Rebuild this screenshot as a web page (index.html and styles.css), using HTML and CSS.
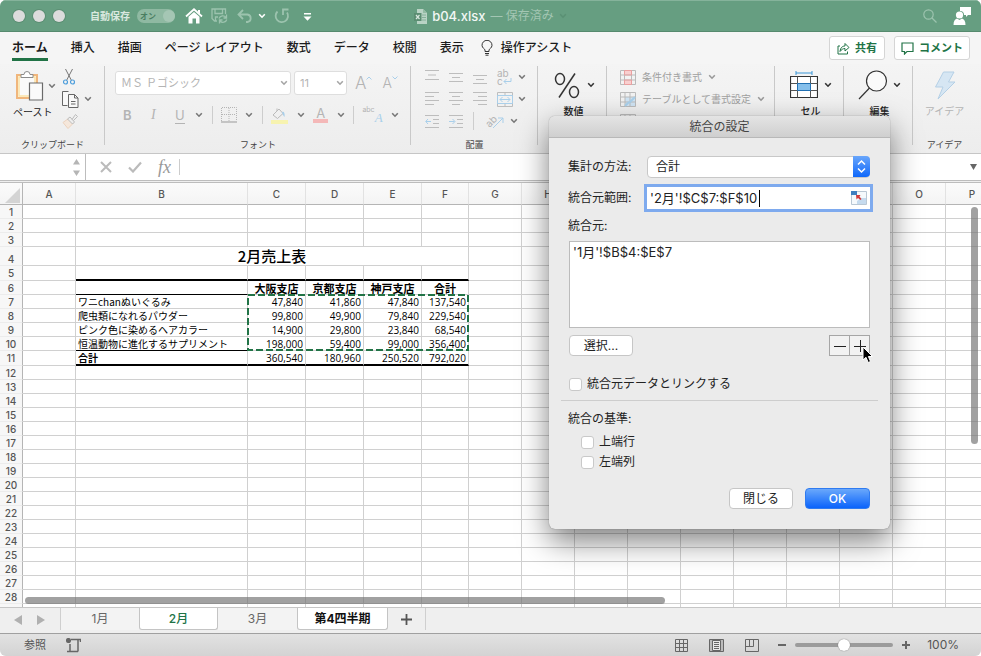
FILE: index.html
```html
<!doctype html>
<html lang="ja">
<head>
    <meta charset="UTF-8">
    <meta name="viewport" content="width=device-width, initial-scale=1.0">
    <title>b04.xlsx</title>
    <link rel="stylesheet" href="styles.css">
</head>
<body>
    <svg class="defs" width="0" height="0">
        <symbol id="caret" viewBox="0 0 8 6"><path d="M1.200 1.300L4 4.200L6.800 1.300" fill="none" stroke="currentColor" stroke-width="1.600"/></symbol>
    </svg>
    <div class="window">
        <header class="titlebar">
            <div class="title-left">
                <div class="lights">
                    <button aria-label="閉じる"></button>
                    <button aria-label="しまう"></button>
                    <button aria-label="拡大"></button>
                </div>
                <span class="autosave">自動保存</span>
                <button class="toggle">オン</button>
                <button class="plain home" aria-label="ホーム"><svg width="18" height="16" viewBox="0 0 18 16"><path d="M1 8.500L9 1.300L17 8.500" fill="none" stroke="#fff" stroke-width="1.800"/><path d="M13 2h2v4l-2-2z" fill="#fff"/><path d="M3.500 8.800L9 4l5.500 4.800V15.500H11V10.500H7.500V15.500H3.500z" fill="#fff"/></svg></button>
                <button class="plain save" aria-label="保存"><svg width="17" height="16" viewBox="0 0 17 16" fill="none" stroke="#9cc3ae" stroke-width="1.300"><path d="M6 13H3.500L1 10.500V1H14.500V6M4 1V5.500H11.500V1M4.500 13V9H7"/><path d="M8 10.500A4 4 0 0 1 15 9.500M15.500 6.500V10H12.500M15.800 11.500A4 4 0 0 1 9 13M8.500 15.500V12H11.500"/></svg></button>
                <button class="plain undo" aria-label="元に戻す"><svg width="16" height="14" viewBox="0 0 16 14" fill="none" stroke="#9cc3ae" stroke-width="1.800"><path d="M6 1L1.500 5.500L6 10M2 5.500H10.500A3.800 3.800 0 0 1 10.500 13H9"/></svg></button>
                <svg class="undo-caret" width="8" height="6"><use href="#caret"/></svg>
                <button class="plain redo" aria-label="やり直し"><svg width="16" height="16" viewBox="0 0 16 16" fill="none" stroke="#9cc3ae" stroke-width="1.800"><path d="M3.500 3.500A6.200 6.200 0 1 0 13 4.500M9 7V1.500H14.500"/></svg></button>
                <button class="plain" aria-label="カスタマイズ"><svg width="9" height="9" viewBox="0 0 9 9" fill="#fff"><path d="M1 1h7v1.500H1zM0.500 4.500h8L4.500 8.800z"/></svg></button>
            </div>
            <div class="doc-title">
                <svg width="13" height="15" viewBox="0 0 13 15"><path d="M3 0h6l4 4v11H3z" fill="#b9d3c5"/><path d="M9 0v4h4" fill="#93bba4"/><path d="M8 6h4M8 8.500h4M8 11h4" stroke="#86b09a"/><path d="M0 4h7.500v8H0z" fill="#5b8d72"/><path d="M2 6l3.500 4M5.500 6L2 10" stroke="#d8e8df" stroke-width="1.200"/></svg>
                <span class="doc-name">b04.xlsx</span>
                <span class="doc-state">— 保存済み</span>
                <svg class="doc-caret" width="8" height="6"><use href="#caret"/></svg>
            </div>
            <div class="title-right">
                <button class="plain" aria-label="検索"><svg width="14" height="14" viewBox="0 0 14 14" fill="none" stroke="#9cc3ae" stroke-width="1.200"><circle cx="5.500" cy="5.500" r="4.700"/><path d="M9 9l4.500 4.500"/></svg></button>
                <button class="plain" aria-label="アカウント"><svg width="18" height="18" viewBox="0 0 18 18" fill="#fff"><path d="M7 0h11v8h-3l-2 2V8h-2A4 4 0 0 0 7 4z"/><circle cx="6.500" cy="8" r="3.600"/><path d="M0.500 18C0.500 14 2 12 4 11.500L6.500 13L9 11.500C11 12 12.500 14 12.500 18z"/></svg></button>
            </div>
        </header>

        <nav class="tabs">
            <a href="#" class="selected">ホーム</a>
            <a href="#">挿入</a>
            <a href="#">描画</a>
            <a href="#">ページ レイアウト</a>
            <a href="#">数式</a>
            <a href="#">データ</a>
            <a href="#">校閲</a>
            <a href="#">表示</a>
            <a href="#" class="assist"><svg width="12" height="16" viewBox="0 0 12 16" fill="none" stroke="#333" stroke-width="1"><path d="M4 11.500V10C4 9 1 8 1 5.300A5 5 0 0 1 11 5.300C11 8 8 9 8 10V11.500zM4 13.500H8M4.500 15.200H7.500"/></svg>操作アシスト</a>
            <div class="tab-buttons">
                <button class="share"><svg width="13" height="13" viewBox="0 0 13 13" fill="none" stroke="#217346" stroke-width="1"><path d="M3 4H1V12H10.500V9.500"/><path d="M3 9.500C3.500 5.500 5.500 4 8 4V1.500L12 5.500L8 9V6.500C6 6.500 4.500 7.500 3 9.500z"/></svg>共有</button>
                <button class="comment"><svg width="13" height="13" viewBox="0 0 13 13" fill="none" stroke="#217346" stroke-width="1.200"><path d="M1 1H12V9.500H6L3.500 12V9.500H1z"/></svg>コメント</button>
            </div>
        </nav>

        <div class="ribbon">
            <section class="group clipboard">
                <div class="clip-tools">
                    <button class="plain paste">
                        <svg width="28" height="31" viewBox="0 0 28 31"><path d="M1 5H21V28H1z" fill="#fafafa" stroke="#f0b67c" stroke-width="2"/><path d="M3 7H19V26H3z" fill="none" stroke="#fbe3a6" stroke-width="1.500"/><path d="M5 7.500V4.500H8A3 3 0 0 1 14 4.500H17V7.500z" fill="#fff" stroke="#8c8c8c"/><path d="M13.500 13H26.500V30H13.500z" fill="#fafafa" stroke="#6a6a6a" stroke-width="1.200"/></svg>
                        <svg class="caret" width="8" height="6"><use href="#caret"/></svg>
                        <span>ペースト</span>
                    </button>
                    <div class="clip-small">
                        <button class="plain" aria-label="カット"><svg width="14" height="18" viewBox="0 0 14 18" fill="none"><path d="M3.500 1L9.500 12.500M10.500 1L4.500 12.500" stroke="#777"/><circle cx="3.500" cy="14" r="2" stroke="#4f9fdc" stroke-width="1.200"/><circle cx="10.500" cy="14" r="2" stroke="#4f9fdc" stroke-width="1.200"/></svg></button>
                        <button class="plain copy" aria-label="コピー"><svg width="17" height="17" viewBox="0 0 17 17" fill="#f8f8f8" stroke="#666"><path d="M5.500 14.500H0.500V0.500H6.500"/><path d="M6.500 3.500H12.500L16 7V16.500H6.500z"/><path d="M12.500 3.500V7H16M9 10.500H13.500M9 13H13.500" fill="none"/></svg><svg class="caret" width="8" height="6"><use href="#caret"/></svg></button>
                        <button class="plain faded" aria-label="書式のコピー"><svg width="16" height="16" viewBox="0 0 16 16" fill="none"><path d="M1 9.500L6.500 5.500L11 10.500L6 15.500z" fill="#fbe0c8" stroke="#eab78e"/><path d="M5.500 6L8 4L12.500 9L10.500 11z" fill="#eee" stroke="#888"/><path d="M10 6.500L13.500 1.500L15.500 3.500L11.500 7.500" stroke="#888"/></svg></button>
                    </div>
                </div>
                <h2>クリップボード</h2>
            </section>

            <section class="group font">
                <div class="font-row">
                    <div class="combo name"><select aria-label="フォント名"><option>ＭＳ Ｐゴシック</option></select><svg width="8" height="6"><use href="#caret"/></svg></div>
                    <div class="combo size"><select aria-label="サイズ"><option>11</option></select><svg width="8" height="6"><use href="#caret"/></svg></div>
                    <button class="plain grow" aria-label="拡大">A<svg width="6" height="4" viewBox="0 0 6 4"><path d="M0.500 3.500L3 1L5.500 3.500" fill="none" stroke="#a9cfea"/></svg></button>
                    <button class="plain shrink" aria-label="縮小">A<svg width="6" height="4" viewBox="0 0 6 4"><path d="M0.500 0.500L3 3L5.500 0.500" fill="none" stroke="#a9cfea"/></svg></button>
                </div>
                <div class="font-row styles">
                    <button class="plain bold">B</button>
                    <button class="plain italic">I</button>
                    <button class="plain underline">U</button>
                    <svg class="caret" width="8" height="6"><use href="#caret"/></svg>
                    <i class="rule"></i>
                    <button class="plain" aria-label="罫線"><svg width="16" height="16" viewBox="0 0 16 16" fill="none" stroke="#b5b5b5"><path d="M0.500 14V0.500H15.500V14M8 1V14M1 7.500H15" stroke-dasharray="1 1"/><path d="M0 15H16" stroke="#999"/></svg></button>
                    <svg class="caret" width="8" height="6"><use href="#caret"/></svg>
                    <i class="rule"></i>
                    <button class="plain" aria-label="塗りつぶし"><svg width="17" height="17" viewBox="0 0 17 17" fill="none"><path d="M2 8L8 2L12 6.500L6.500 11.500zM6 4V1.500" stroke="#bbb"/><path d="M11 5C13 4 14 6 13.500 10C12.500 9 12 8 11 5z" fill="#a9cfea"/><path d="M0 13H17V17H0z" fill="#f7f3b0"/></svg></button>
                    <svg class="caret" width="8" height="6"><use href="#caret"/></svg>
                    <button class="plain font-color">A</button>
                    <svg class="caret" width="8" height="6"><use href="#caret"/></svg>
                    <i class="rule"></i>
                    <button class="plain phonetic">abc<b>A</b></button>
                    <svg class="caret" width="8" height="6"><use href="#caret"/></svg>
                </div>
                <h2>フォント</h2>
            </section>

            <section class="group align">
                <div class="align-grid">
                    <svg width="14" height="14" class="ln"><path d="M0 .5H14M3 5H11M0 9.500H14"/></svg>
                    <svg width="14" height="14" class="ln"><path d="M0 3.500H14M3 7.500H11M0 11.500H14"/></svg>
                    <svg width="14" height="14" class="ln"><path d="M0 5.500H14M3 9.500H11M0 13.500H14"/></svg>
                    <button class="plain wrap"><span>ab</span><span>c<svg width="9" height="7" viewBox="0 0 9 7" fill="none" stroke="#a9cfea"><path d="M8 0V3.500H1M3.500 1L1 3.500L3.500 6"/></svg></span></button>
                    <svg class="caret" width="8" height="6"><use href="#caret"/></svg>
                    <svg width="14" height="14" class="ln"><path d="M0 .5H14M0 4.500H9M0 8.500H14M0 12.500H9"/></svg>
                    <svg width="14" height="14" class="ln"><path d="M0 .5H14M3 4.500H11M0 8.500H14M3 12.500H11"/></svg>
                    <svg width="14" height="14" class="ln"><path d="M0 .5H14M5 4.500H14M0 8.500H14M5 12.500H14"/></svg>
                    <svg width="16" height="15" viewBox="0 0 16 15" fill="none" stroke="#bdbdbd"><path d="M.5.500H15.500V14.500H.5zM8 .5V3M8 12V14.500"/><path d="M.5 3.500H15.500V11.500H.5zM3 7.500H13M5.500 5L3 7.500L5.500 10M10.500 5L13 7.500L10.500 10" stroke="#a9cfea"/></svg>
                    <svg class="caret" width="8" height="6"><use href="#caret"/></svg>
                    <svg width="14" height="14" class="ln"><path d="M0 1.500H14M8 5.500H14M8 9.500H14M0 13.500H14"/><path d="M6 7.500H1M3 5L.7 7.500L3 10" stroke="#a9cfea"/></svg>
                    <svg width="14" height="14" class="ln"><path d="M0 1.500H14M8 5.500H14M8 9.500H14M0 13.500H14"/><path d="M0 7.500H5.500M3.500 5L6 7.500L3.500 10" stroke="#a9cfea"/></svg>
                    <i class="rule"></i>
                    <button class="plain rotate"><span>ab</span><svg width="12" height="12" viewBox="0 0 12 12" fill="none" stroke="#a9cfea"><path d="M1 11L11 1M6 1H11V6"/></svg></button>
                    <svg class="caret near" width="8" height="6"><use href="#caret"/></svg>
                </div>
                <h2>配置</h2>
            </section>

            <section class="group big">
                <button class="plain big-button"><svg width="26" height="27" viewBox="0 0 26 27" fill="none" stroke="#333" stroke-width="1.500"><ellipse cx="6" cy="7" rx="4.500" ry="5.500"/><ellipse cx="20" cy="20" rx="4.500" ry="5.500"/><path d="M21 1.500L5 25.500"/></svg><svg class="caret dark" width="8" height="6"><use href="#caret"/></svg><span>数値</span></button>
            </section>

            <section class="group cond">
                <button class="plain"><svg width="16" height="15" viewBox="0 0 16 15" fill="none"><path d="M4 1H12V5H4zM7 10H12V14H4V10z" fill="#f9cfcf"/><path d="M.5.500H15.500V14.500H.5zM4.500.500V14.500M11.500.500V14.500M.5 5H15.500M.5 10H15.500" stroke="#bbb"/><path d="M4.500.500H11.500V5H4.500zM4.500 10H11.500V14.500H4.500z" stroke="#eba0a0"/></svg>条件付き書式<svg class="caret" width="8" height="6"><use href="#caret"/></svg></button>
                <button class="plain"><svg width="16" height="15" viewBox="0 0 16 15" fill="none"><path d="M5 5H15V14H5z" fill="#cfe4f4"/><path d="M.5.500H15.500V14.500H.5zM5 .5V14.500M10 .5V14.500M.5 5H15.500M.5 10H15.500" stroke="#bbb"/><path d="M15 5L9 11M9 10L5 14" stroke="#a9cfea" stroke-width="2"/></svg>テーブルとして書式設定<svg class="caret" width="8" height="6"><use href="#caret"/></svg></button>
                <button class="plain" aria-label="セルのスタイル"><svg width="16" height="15" viewBox="0 0 16 15" fill="none"><path d="M.5.500H15.500V14.500H.5zM5 .5V14.500M10 .5V14.500M.5 5H15.500M.5 10H15.500" stroke="#bbb"/></svg></button>
            </section>

            <section class="group big">
                <button class="plain big-button"><svg width="28" height="28" viewBox="0 0 28 28" fill="none"><path d="M6 2H22M6 0V4M22 0V4" stroke="#3a96d6"/><path d="M.5 5.500H27.500V26.500H.5z" fill="#fff" stroke="#333" stroke-width="1.200"/><path d="M7.500 5.500V26.500M20.500 5.500V26.500M.5 12.500H27.500M.5 19.500H27.500" stroke="#555"/><path d="M7.500 12.500H20.500V19.500H7.500z" fill="#85bfeb" stroke="#1f6fb2"/></svg><svg class="caret dark" width="8" height="6"><use href="#caret"/></svg><span>セル</span></button>
            </section>

            <section class="group big">
                <button class="plain big-button"><svg width="30" height="30" viewBox="0 0 30 30" fill="none" stroke="#333" stroke-width="1.200"><circle cx="18.500" cy="11" r="10" fill="#fafafa"/><path d="M11.500 18L1 29"/></svg><svg class="caret dark" width="8" height="6"><use href="#caret"/></svg><span>編集</span></button>
            </section>

            <section class="group ideas">
                <button class="plain"><svg width="22" height="29" viewBox="0 0 22 29"><path d="M9.500 1H20L14.500 11H21L4 28L9 16H1.500z" fill="#d6e6f3" stroke="#b4cfe5"/></svg><span>アイデア</span></button>
                <h2>アイデア</h2>
            </section>
        </div>

        <div class="formula-bar">
            <div class="name-box"><input type="text" aria-label="名前ボックス"><svg width="7" height="17" viewBox="0 0 7 17" fill="#b5b5b5"><path d="M0 5.500L3.500 0L7 5.500zM0 11.500L3.500 17L7 11.500z"/></svg></div>
            <button class="plain" aria-label="キャンセル"><svg width="12" height="12" viewBox="0 0 12 12" stroke="#bbb" stroke-width="2"><path d="M1 1L11 11M11 1L1 11"/></svg></button>
            <button class="plain" aria-label="入力"><svg width="14" height="12" viewBox="0 0 14 12" fill="none" stroke="#bbb" stroke-width="2.200"><path d="M1 6.500L5 10.500L13 1.500"/></svg></button>
            <button class="plain fx">fx</button>
            <input type="text" class="formula" aria-label="数式">
            <button class="plain" aria-label="展開"><svg width="7" height="6" viewBox="0 0 7 6"><path d="M0 0H7L3.500 6z" fill="#666"/></svg></button>
        </div>

        <main class="sheet">
            <table class="grid">
                <colgroup>
                    <col class="col-head"><col class="col-std"><col class="col-item">
                    <col class="col-shop"><col class="col-shop"><col class="col-shop"><col class="col-total">
                    <col class="col-std" span="10">
                </colgroup>
                <thead><tr id="letters"></tr></thead>
                <tbody id="rows"></tbody>
            </table>
            <div class="vbar"></div>
            <div class="hbar"></div>
        </main>

        <nav class="sheet-tabs">
            <button class="plain arrow" aria-label="前"><svg width="8" height="10" viewBox="0 0 8 10"><path d="M8 0V10L0 5z" fill="#b0b0b0"/></svg></button>
            <button class="plain arrow" aria-label="次"><svg width="8" height="10" viewBox="0 0 8 10"><path d="M0 0V10L8 5z" fill="#b0b0b0"/></svg></button>
            <a href="#" class="first">1月</a>
            <a href="#" class="selected">2月</a>
            <a href="#">3月</a>
            <a href="#" class="white">第4四半期</a>
            <button class="plain add" aria-label="シートの追加"><svg width="11" height="11" viewBox="0 0 11 11" stroke="#555" stroke-width="1.800"><path d="M5.500 0V11M0 5.500H11"/></svg></button>
        </nav>

        <footer class="status">
            <span class="mode">参照</span>
            <svg width="15" height="15" viewBox="0 0 15 15" fill="none" stroke="#666" stroke-width="1.500"><circle cx="2.500" cy="2.500" r="1.800" fill="#666"/><path d="M5 1.500H14.500V4M12 1.500V13.500M1 13.500H12M4 6V13"/></svg>
            <div class="views">
                <button class="plain" aria-label="標準"><svg width="13" height="13" viewBox="0 0 13 13" fill="none" stroke="#666"><path d="M.5.500H12.500V12.500H.5zM4.500.500V12.500M8.500.500V12.500M.5 4.500H12.500M.5 8.500H12.500"/></svg></button>
                <button class="plain" aria-label="ページ レイアウト"><svg width="15" height="13" viewBox="0 0 15 13" fill="none" stroke="#666"><path d="M.5.500H14.500V12.500H.5z" fill="#bbb"/><path d="M3.500 1.500H11.500V11.500H3.500z" fill="#e8e8e8"/><path d="M5 3.500H10M5 5.500H10M5 7.500H10M5 9.500H10"/></svg></button>
                <button class="plain" aria-label="改ページ"><svg width="14" height="13" viewBox="0 0 14 13" fill="none" stroke="#666"><path d="M.5.500H13.500V12.500H.5zM.5 7.500H8.500V.5M4.500 .5V7.500"/></svg></button>
            </div>
            <button class="plain" aria-label="縮小"><svg width="8" height="8" viewBox="0 0 8 8" stroke="#666" stroke-width="2"><path d="M0 4H8"/></svg></button>
            <input type="range" class="zoom" min="0" max="100" value="50" aria-label="ズーム">
            <button class="plain" aria-label="拡大"><svg width="8" height="8" viewBox="0 0 8 8" stroke="#666" stroke-width="2"><path d="M0 4H8M4 0V8"/></svg></button>
            <span class="percent">100%</span>
        </footer>

        <form class="dialog" role="dialog" aria-labelledby="dialog-title">
            <h1 id="dialog-title">統合の設定</h1>
            <div class="dialog-body">
                <div class="field">
                    <label for="func">集計の方法:</label>
                    <div class="popup">
                        <select id="func"><option>合計</option></select>
                        <svg width="17" height="21" viewBox="0 0 17 21" fill="none" stroke="#fff" stroke-width="1.500"><path d="M5 8.500L8.500 5L12 8.500M5 12.500L8.500 16L12 12.500"/></svg>
                    </div>
                </div>
                <div class="field">
                    <label for="range">統合元範囲:</label>
                    <div class="range">
                        <input id="range" type="text" value="'2月'!$C$7:$F$10">
                        <i class="cursor"></i>
                        <svg width="16" height="14" viewBox="0 0 16 14"><path d="M.5.500H15.500V13.500H.5z" fill="#f5f9fc" stroke="#b9c7d4"/><path d="M0 0H6V4H0z" fill="#3f7fbf"/><path d="M10 7H15V13H6V10z" fill="#c5daee"/><path d="M5 4H9.500L8.500 5.500L10.500 8L9.500 9L7 7L5.500 8.500z" fill="#d13a3a"/></svg>
                    </div>
                </div>
                <label for="refs" class="refs-label">統合元:</label>
                <textarea id="refs">'1月'!$B$4:$E$7</textarea>
                <div class="refs-buttons">
                    <button type="button" class="push">選択...</button>
                    <div class="plus-minus">
                        <button type="button" aria-label="削除"><svg width="12" height="12"><path d="M0 6.500H12" stroke="#222"/></svg></button>
                        <button type="button" aria-label="追加"><svg width="12" height="12"><path d="M0 6.500H12M6.500 0V12" stroke="#222"/></svg></button>
                        <svg class="pointer" width="12" height="18" viewBox="0 0 12 18"><path d="M1 1V14L4 11.300L6.200 16.500L8.500 15.500L6.400 10.500H10.500z" fill="#000" stroke="#fff"/></svg>
                    </div>
                </div>
                <label class="check link"><input type="checkbox">統合元データとリンクする</label>
                <hr>
                <fieldset>
                    <legend>統合の基準:</legend>
                    <label class="check"><input type="checkbox">上端行</label>
                    <label class="check"><input type="checkbox">左端列</label>
                </fieldset>
                <div class="actions">
                    <button type="button" class="push">閉じる</button>
                    <button type="submit" class="push ok">OK</button>
                </div>
            </div>
        </form>
    </div>

    <script>
        var letters = 'ABCDEFGHIJKLMNOP'.split('');
        var data = {
            6: ['', '大阪支店', '京都支店', '神戸支店', '合計'],
            7: ['ワニchanぬいぐるみ', '47,840', '41,860', '47,840', '137,540'],
            8: ['爬虫類になれるパウダー', '99,800', '49,900', '79,840', '229,540'],
            9: ['ピンク色に染めるヘアカラー', '14,900', '29,800', '23,840', '68,540'],
            10: ['恒温動物に進化するサプリメント', '198,000', '59,400', '99,000', '356,400'],
            11: ['合計', '360,540', '180,960', '250,520', '792,020']
        };
        // dashed frame round C7:F10, anchored in C7
        var ants = '<svg class="ants"><rect x="1" y="1" width="220" height="55"/></svg>';
        var head = '<th class="corner"><svg width="15" height="15"><path d="M15 0V15H0z" fill="#d4d4d4"/></svg></th>';
        letters.forEach(function (l) {
            head += '<th>' + l + '</th>';
        });
        document.getElementById('letters').innerHTML = head;

        var html = '';
        for (var r = 1; r <= 29; r++) {
            html += '<tr class="r' + r + '"><th>' + (r < 29 ? r : '') + '</th>';
            for (var c = 0; c < letters.length; c++) {
                if (r === 4 && c === 1) {
                    html += '<td class="title" colspan="5">2月売上表</td>';
                    c = 5;
                    continue;
                }
                var inTable = c >= 1 && c <= 5;
                var text = data[r] && inTable ? data[r][c - 1] : '';
                var cls = inTable ? 't ' + (c === 1 ? 'item' : 'num') : '';
                html += '<td class="' + cls + '">' + text + (r === 7 && c === 2 ? ants : '') + '</td>';
            }
            html += '</tr>';
        }
        document.getElementById('rows').innerHTML = html;
    </script>
</body>
</html>
```
FILE: styles.css
```css
*{
    box-sizing: border-box;
}
body{
    margin: 0;
    background: #fff;
    font-family: Inter, "Noto Sans CJK JP", sans-serif;
    font-size: 12px;
    line-height: 16px;
    color: #222;
}
button,input,select,textarea{
    font: inherit;
    color: inherit;
    margin: 0;
}
a{
    color: inherit;
    text-decoration: none;
}
svg{
    display: block;
    flex: none;
}
h1,h2{
    margin: 0;
    font-weight: normal;
}
.defs{
    position: absolute;
}
.plain{
    border: 0;
    padding: 0;
    background: none;
    display: flex;
    align-items: center;
}
.caret{
    color: #777;
}
.caret.dark{
    color: #333;
}
.window{
    position: relative;
    display: flex;
    flex-direction: column;
    height: 100vh;
    border-radius: 6px;
    overflow: hidden;
    background: #efefef;
}

/* title bar */
.titlebar{
    height: 32px;
    flex: none;
    display: grid;
    grid-template-columns: 1fr auto 1fr;
    align-items: center;
    background: #669e81;
    border-top: 1px solid #85b39b;
    border-bottom: 1px solid #568a6e;
}
.title-left{
    display: flex;
    align-items: center;
    padding-left: 13px;
}
.lights{
    display: flex;
    gap: 8px;
}
.lights button{
    width: 12px;
    height: 12px;
    padding: 0;
    border: 0;
    border-radius: 50%;
    background: #dcdcdc;
    box-shadow: 0 0 0 1px #5c8f74;
}
.autosave{
    margin-left: 25px;
    font-size: 10px;
    font-weight: 700;
    color: #d9e8df;
}
.toggle{
    position: relative;
    width: 38px;
    height: 14px;
    margin-left: 7px;
    padding: 0 16px 0 0;
    border: 0;
    border-radius: 7px;
    background: #8fb9a2;
    color: #4a7d61;
    font-size: 8px;
    font-weight: 700;
    line-height: 14px;
    text-align: center;
    white-space: nowrap;
}
.toggle::after{
    content: "";
    position: absolute;
    right: 0;
    top: 1px;
    width: 12px;
    height: 12px;
    border-radius: 50%;
    background: #a5c6b4;
}
.home{
    margin-left: 10px;
}
.save{
    margin-left: 8px;
}
.undo{
    margin-left: 9px;
}
.undo-caret{
    margin: 0 8px 0 5px;
    color: #fff;
}
.redo{
    margin-right: 13px;
}
.doc-title{
    display: flex;
    align-items: center;
    color: #a3c6b3;
}
.doc-name{
    margin: 0 5px;
    font-size: 13px;
    font-weight: 500;
    color: #f2f7f4;
}
.doc-caret{
    margin-left: 5px;
    color: #5a9074;
}
.title-right{
    display: flex;
    justify-content: flex-end;
    align-items: center;
    gap: 16px;
    padding-right: 10px;
}

/* ribbon tabs */
.tabs{
    height: 32px;
    flex: none;
    display: flex;
    align-items: center;
    gap: 23px;
    padding: 0 11px 0 12px;
    background: #f5f5f5;
    font-weight: 500;
    color: #1c1c1c;
}
.tabs a{
    white-space: nowrap;
    line-height: 20px;
}
.tabs .selected{
    font-weight: 700;
    padding-top: 3px;
    border-bottom: 3px solid #217346;
}
.tabs .assist{
    display: flex;
    align-items: center;
    gap: 8px;
    margin-left: -6px;
}
.tab-buttons{
    display: flex;
    gap: 9px;
    margin-left: auto;
}
.tab-buttons button{
    display: flex;
    align-items: center;
    gap: 5px;
    height: 24px;
    padding: 0 7px;
    border: 1px solid #d5d5d5;
    border-radius: 3px;
    background: #fff;
    color: #217346;
    font-size: 11px;
    font-weight: 700;
    white-space: nowrap;
}
.tab-buttons .comment{
    padding: 0 6px;
}

/* ribbon */
.ribbon{
    height: 89px;
    flex: none;
    display: flex;
    padding-top: 2px;
    background: linear-gradient(#f4f4f4, #ededed);
}
.group{
    flex: none;
    display: flex;
    flex-direction: column;
    height: 86px;
    background: linear-gradient(#c9c9c9, #c9c9c9) right top / 1px 79px no-repeat;
    overflow: hidden;
}
.group h2{
    margin-top: auto;
    font-size: 9px;
    line-height: 14px;
    text-align: center;
    color: #444;
}
.clipboard{
    width: 105px;
}
.clip-tools{
    display: flex;
    gap: 6px;
    padding-left: 13px;
}
.paste{
    display: grid;
    grid-template-columns: 31px 8px;
    justify-items: end;
    row-gap: 4px;
    padding-top: 4px;
    align-content: start;
    column-gap: 4px;
}
.paste span{
    grid-column: 1 / 3;
    justify-self: start;
    font-size: 10px;
    line-height: 14px;
    white-space: nowrap;
}
.clip-small{
    display: grid;
    grid-template-rows: 22px 22px 22px;
    align-items: center;
}
.copy{
    gap: 5px;
}
.faded{
    opacity: .5;
}
.font{
    width: 306px;
    padding: 5px 10px 0;
}
.font-row{
    display: flex;
    align-items: center;
    gap: 3px;
    color: #b4b4b4;
}
.combo{
    position: relative;
    height: 24px;
}
.combo select{
    width: 100%;
    height: 100%;
    padding: 0 5px;
    border: 1px solid #dedede;
    border-radius: 3px;
    background: #fff;
    appearance: none;
    font-size: 11px;
    color: #b4b4b4;
}
.combo svg{
    position: absolute;
    right: 3px;
    top: 9px;
    color: #a5a5a5;
}
.name{
    width: 176px;
}
.size{
    width: 53px;
}
.grow,.shrink{
    align-items: flex-start;
    line-height: 20px;
}
.grow{
    margin-left: 5px;
    font-size: 17px;
    font-weight: 300;
}
.shrink{
    margin-left: 7px;
    font-size: 14px;
    font-weight: 300;
}
.grow svg,.shrink svg{
    margin-top: 3px;
}
.styles{
    justify-content: space-between;
    height: 24px;
    margin-top: 8px;
    padding: 0 2px 0 8px;
    font-size: 13px;
}
.bold{
    font-weight: 600;
}
.italic{
    margin-left: 11px;
    font-family: "Liberation Serif", serif;
    font-style: italic;
    font-size: 14px;
}
.underline{
    margin: 0 2px 0 11px;
    border-bottom: 1px solid #b4b4b4;
}
.rule{
    width: 1px;
    height: 18px;
    background: #cdcdcd;
}
.font-color{
    height: 16px;
    padding: 0 3px;
    border-bottom: 4px solid #f4b8b8;
    line-height: 12px;
}
.phonetic{
    align-items: flex-start;
    font-size: 7px;
    line-height: 8px;
}
.phonetic b{
    margin-top: 6px;
    font-family: "Liberation Serif", serif;
    font-style: italic;
    font-weight: normal;
    font-size: 13px;
    line-height: 12px;
    color: #a9cfea;
}
.align{
    width: 127px;
}
.align-grid{
    display: grid;
    grid-template-columns: 14px 14px 14px 16px 8px;
    grid-template-rows: repeat(3, 22px);
    column-gap: 10px;
    align-items: center;
    padding-left: 14px;
}
.align-grid .rule{
    justify-self: start;
}
.align-grid .caret{
    margin-left: -5px;
}
.align-grid .near{
    margin-left: -13px;
}
.ln{
    fill: none;
    stroke: #bdbdbd;
}
.wrap{
    flex-direction: column;
    align-items: flex-start;
    font-size: 10px;
    line-height: 8px;
    color: #b4b4b4;
}
.wrap span{
    display: flex;
    align-items: center;
    height: 8px;
}
.rotate{
    margin-left: -12px;
    color: #b4b4b4;
    font-size: 10px;
}
.rotate span{
    transform: rotate(-45deg);
}
.rotate svg{
    margin: 4px 0 0 -5px;
}
.big{
    width: 69px;
}
.big-button{
    display: grid;
    grid-template-columns: 30px 8px;
    grid-template-rows: 38px 14px;
    column-gap: 5px;
    justify-items: center;
    align-items: center;
    padding-left: 14px;
    font-size: 10px;
    font-weight: 500;
}
.big-button span{
    grid-column: 1 / 3;
    line-height: 14px;
    white-space: nowrap;
}
.cond{
    width: 168px;
    padding-left: 13px;
}
.cond button{
    height: 22px;
    gap: 6px;
    font-size: 10px;
    color: #a0a0a0;
    white-space: nowrap;
}
.cond .caret{
    color: #999;
}
.ideas{
    flex: 1;
    padding-right: 5px;
    background: none;
}
.ideas button{
    flex-direction: column;
    padding-top: 5px;
    font-size: 10px;
    color: #b4b4b4;
    gap: 3px;
}

/* formula bar */
.formula-bar{
    height: 28px;
    flex: none;
    display: flex;
    align-items: center;
    gap: 16px;
    padding-right: 4px;
    background: #fff;
    border-top: 1px solid #c6c6c6;
    border-bottom: 1px solid #bdbdbd;
}
.name-box{
    display: flex;
    align-items: center;
    width: 86px;
    height: 26px;
    padding-right: 5px;
    border-right: 1px solid #bdbdbd;
}
.name-box input{
    flex: 1;
    min-width: 0;
    border: 0;
    outline: 0;
}
.name-box + button{
    margin-left: -2px;
}
.fx{
    font-family: "Liberation Serif", serif;
    font-style: italic;
    font-size: 18px;
    color: #999;
}
.formula{
    flex: 1;
    height: 16px;
    margin-left: -8px;
    border: 0;
    border-left: 1px solid #ccc;
    outline: 0;
}

/* sheet */
.sheet{
    position: relative;
    flex: 1;
    min-height: 0;
    margin-top: 1px;
    border-top: 1px solid #bdbdbd;
    background: #fff;
    overflow: hidden;
}
.grid{
    width: 998px;
    table-layout: fixed;
    border-collapse: separate;
    border-spacing: 0;
    font-family: "Noto Sans CJK JP", sans-serif;
    font-size: 10px;
    line-height: 12px;
    color: #000;
}
.col-head{
    width: 23px;
}
.col-std{
    width: 53px;
}
.col-item{
    width: 172px;
}
.col-shop{
    width: 58px;
}
.col-total{
    width: 47px;
}
.grid th,.grid td{
    height: 14px;
    padding: 0;
    border-right: 1px solid #d0d0d0;
    border-bottom: 1px solid #d0d0d0;
    white-space: nowrap;
}
.grid th{
    font-family: Inter, sans-serif;
    font-size: 10px;
    font-weight: 500;
    color: #555;
    background: #f7f7f7;
}
.grid thead th{
    height: 22px;
    border-bottom-color: #b5b5b5;
    border-right-color: #e2e2e2;
    background: linear-gradient(#fbfbfb, #f4f4f4);
}
.grid .corner,.grid tbody th{
    border-right-color: #b5b5b5;
}
.corner svg{
    margin: 3px 0 0 5px;
}
.grid tbody th{
    border-bottom-color: #ececec;
}
.grid .item{
    padding-left: 2px;
}
.grid .num{
    padding-right: 2px;
    text-align: right;
    font-family: "Open Sans", "Noto Sans CJK JP", sans-serif;
}
.grid .r4 td,.grid .r4 th{
    height: 19px;
    vertical-align: bottom;
}
.grid .title{
    font-size: 15px;
    font-weight: 500;
    line-height: 18px;
    text-align: center;
}
.grid .r5 td,.grid .r5 th,.grid .r11 td,.grid .r11 th{
    height: 15px;
}
.grid .r5 .t,.grid .r11 .t{
    border-bottom: 2px solid #000;
}
.grid .r6 .item,.grid .r10 .item{
    border-bottom-color: #000;
}
.grid .r6 .num{
    padding: 0;
    text-align: center;
    font-family: "Noto Sans CJK JP", sans-serif;
    font-size: 11px;
    font-weight: 700;
}
.grid .r11 .item{
    font-weight: 700;
}
.grid .r7 .num{
    position: relative;
}
.ants{
    position: absolute;
    left: -1px;
    top: -1px;
    z-index: 1;
    width: 223px;
    height: 58px;
}
.ants rect{
    fill: none;
    stroke: #217346;
    stroke-width: 2px;
    stroke-dasharray: 7 3;
}
.vbar,.hbar{
    position: absolute;
    border-radius: 4px;
    background: rgba(110, 110, 110, .65);
}
.vbar{
    right: 3px;
    top: 24px;
    width: 7px;
    height: 237px;
}
.hbar{
    left: 25px;
    bottom: 3px;
    width: 640px;
    height: 7px;
}

/* sheet tabs */
.sheet-tabs{
    height: 26px;
    flex: none;
    display: flex;
    align-items: flex-start;
    padding-left: 14px;
    background: #efefef;
    border-top: 1px solid #c6c6c6;
    color: #666;
}
.arrow{
    height: 24px;
    width: 23px;
}
.sheet-tabs a{
    width: 79px;
    height: 22px;
    line-height: 22px;
    text-align: center;
    background: #f3f3f3;
}
.sheet-tabs .first{
    border-left: 1px solid #cfcfcf;
}
.sheet-tabs .selected,.sheet-tabs .white{
    background: #fff;
    border: 1px solid #c4c4c4;
    border-top: 0;
    border-radius: 0 0 3px 3px;
}
.sheet-tabs .selected{
    font-weight: 500;
    color: #217346;
}
.sheet-tabs .white{
    width: 91px;
    font-weight: 700;
    color: #111;
}
.add{
    width: 38px;
    height: 22px;
    justify-content: center;
    border-right: 1px solid #cfcfcf;
}

/* status bar */
.status{
    height: 23px;
    flex: none;
    display: flex;
    align-items: center;
    gap: 9px;
    padding: 0 22px 0 24px;
    background: linear-gradient(#e2e2e2, #d3d3d3);
    border-top: 1px solid #a0a0a0;
    color: #555;
}
.mode{
    margin-right: 11px;
    font-size: 11px;
}
.views{
    display: flex;
    align-items: center;
    gap: 21px;
    margin: 0 10px 0 auto;
}
.zoom{
    width: 98px;
    height: 12px;
    appearance: none;
    background: none;
}
.zoom::-webkit-slider-runnable-track{
    height: 4px;
    border-radius: 2px;
    background: #9b9b9b;
}
.zoom::-webkit-slider-thumb{
    appearance: none;
    width: 12px;
    height: 12px;
    margin-top: -4px;
    border-radius: 50%;
    background: #fff;
    box-shadow: 0 0 1px #555;
}
.percent{
    margin-left: 8px;
}

/* dialog */
.dialog{
    position: absolute;
    left: 549px;
    top: 116px;
    z-index: 2;
    width: 341px;
    border-radius: 6px;
    background: #ebebeb;
    box-shadow: 0 0 1px #666, 0 12px 30px rgba(0, 0, 0, .5);
}
.dialog h1{
    height: 22px;
    border-bottom: 1px solid #b8b8b8;
    border-radius: 6px 6px 0 0;
    background: linear-gradient(#e4e4e4, #cfcfcf);
    font-size: 12px;
    line-height: 22px;
    text-align: center;
    color: #444;
}
.dialog-body{
    display: flex;
    flex-direction: column;
    padding: 18px 20px 20px;
}
.field{
    display: grid;
    grid-template-columns: 78px 1fr;
    align-items: center;
    height: 22px;
    margin-bottom: 9px;
}
.field label,.refs-label,legend{
    margin-left: -1px;
}
.popup,.range{
    position: relative;
    height: 22px;
}
.popup select{
    width: 100%;
    height: 22px;
    padding: 0 8px;
    border: 1px solid #c8c8c8;
    border-radius: 4px;
    background: #fff;
    appearance: none;
}
.popup svg{
    position: absolute;
    right: 0;
    top: 0;
    border-radius: 0 4px 4px 0;
    background: linear-gradient(#69a6fb, #0f68fb);
}
.range{
    display: flex;
    align-items: center;
    padding: 0 3px;
    background: #fff;
    box-shadow: 0 0 0 3px #7eaaee;
}
.range input{
    width: 109px;
    padding: 0;
    border: 0;
    outline: 0;
    background: none;
    font-size: 13px;
}
.range .cursor{
    width: 1px;
    height: 17px;
    background: #000;
}
.range svg{
    margin-left: auto;
}
#refs{
    height: 87px;
    margin-top: 7px;
    padding: 1px 3px;
    border: 1px solid #bcbcbc;
    outline: 0;
    background: #fff;
    resize: none;
    font-size: 13px;
    line-height: 18px;
}
.refs-buttons{
    display: flex;
    justify-content: space-between;
    margin-top: 7px;
}
.push{
    width: 64px;
    height: 21px;
    padding: 0;
    border: 1px solid #c6c6c6;
    border-radius: 4px;
    background: #fff;
    line-height: 18px;
}
.plus-minus{
    position: relative;
    display: flex;
}
.plus-minus button{
    display: flex;
    align-items: center;
    justify-content: center;
    width: 21px;
    height: 21px;
    padding: 0;
    border: 1px solid #a6a6a6;
    background: #f2f2f2;
}
.plus-minus button + button{
    margin-left: -1px;
}
.pointer{
    position: absolute;
    right: -4px;
    top: 11px;
}
.check{
    display: flex;
    align-items: center;
    gap: 5px;
    height: 20px;
}
.check input{
    width: 13px;
    height: 13px;
    appearance: none;
    border: 1px solid #c9c9c9;
    border-radius: 3px;
    background: #fff;
}
.link{
    margin-top: 18px;
}
.dialog hr{
    width: auto;
    height: 1px;
    margin: 6px -8px 10px;
    border: 0;
    background: #cdcdcd;
}
.dialog fieldset{
    margin: 0;
    padding: 5px 0 0 12px;
    border: 0;
}
.dialog legend{
    margin-left: -13px;
    padding: 0;
}
.actions{
    display: flex;
    justify-content: flex-end;
    gap: 12px;
    margin-top: 16px;
}
.actions .ok{
    width: 65px;
    border-color: #2f7bf0;
    background: linear-gradient(#6aa8fb, #0a63fb);
    color: #fff;
    font-weight: 500;
}
```
